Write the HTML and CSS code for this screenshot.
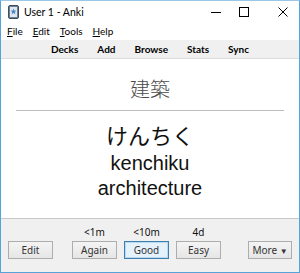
FILE: index.html
```html
<!DOCTYPE html>
<html>
<head>
<meta charset="utf-8">
<link rel="stylesheet" href="styles.css">
</head>
<body>
<div class="window">
  <div class="titlebar">
    <svg class="appicon" width="11" height="14" viewBox="0 0 11 14">
      <rect x="0.5" y="0.5" width="10" height="13" rx="1.5" fill="#6d7f93" stroke="#3f4d5c"/>
      <rect x="2" y="2" width="7" height="10" fill="#dfe8f2"/>
      <path d="M5.5 3.5 L6.3 5.6 L8.5 5.7 L6.8 7.1 L7.4 9.3 L5.5 8.1 L3.6 9.3 L4.2 7.1 L2.5 5.7 L4.7 5.6 Z" fill="#4e86c4"/>
    </svg>
    <span class="title">User 1 - Anki</span>
    <div class="controls">
      <svg class="min" width="10" height="10" viewBox="0 0 10 10"><path d="M0 5.5H10" stroke="#000" stroke-width="1"/></svg>
      <svg class="max" width="10" height="10" viewBox="0 0 10 10"><rect x="0.5" y="0.5" width="9" height="9" fill="none" stroke="#000"/></svg>
      <svg class="close" width="10" height="10" viewBox="0 0 10 10"><path d="M0.5 0.5L9.5 9.5M9.5 0.5L0.5 9.5" stroke="#000" stroke-width="1"/></svg>
    </div>
  </div>
  <div class="menubar">
    <span><u>F</u>ile</span>
    <span><u>E</u>dit</span>
    <span><u>T</u>ools</span>
    <span><u>H</u>elp</span>
  </div>
  <div class="toolbar">
    <span>Decks</span>
    <span>Add</span>
    <span>Browse</span>
    <span>Stats</span>
    <span>Sync</span>
  </div>
  <div class="card">
    <div class="front">建築</div>
    <hr class="divider">
    <div class="reading">けんちく</div>
    <div class="answer first">kenchiku</div>
    <div class="answer">architecture</div>
  </div>
  <div class="bottom">
    <div class="left"><button class="btn">Edit</button></div>
    <div class="middle">
      <div class="ans"><span class="time">&lt;1m</span><button class="btn">Again</button></div>
      <div class="ans"><span class="time">&lt;10m</span><button class="btn focus">Good</button></div>
      <div class="ans"><span class="time">4d</span><button class="btn">Easy</button></div>
    </div>
    <div class="right"><button class="btn more">More <span class="tri">▼</span></button></div>
  </div>
</div>
</body>
</html>
```

FILE: styles.css
```css
html, body {
  margin: 0;
  padding: 0;
  background: #fff;
}
.window {
  width: 300px;
  height: 273px;
  box-sizing: border-box;
  border: 1px solid #56a3da;
  border-top-color: #9cc6e6;
  display: flex;
  flex-direction: column;
  font-family: "Noto Sans", "Open Sans", sans-serif;
  font-size: 11px;
  color: #000;
  background: #fff;
}
.titlebar {
  height: 21px;
  display: flex;
  align-items: center;
  padding-left: 7px;
}
.appicon {
  margin-right: 5px;
  margin-top: 1px;
}
.title {
  font-family: "Lato", "Noto Sans", sans-serif;
  font-size: 10.5px;
  color: #000;
}
.controls {
  margin-left: auto;
  display: flex;
  align-items: center;
  padding-right: 11px;
}
.controls .max {
  margin-left: 18px;
}
.controls .close {
  margin-left: 29px;
}
.menubar {
  height: 18px;
  display: flex;
  align-items: center;
  padding-left: 6px;
  gap: 10px;
  font-family: "Lato", "Noto Sans", sans-serif;
  font-size: 10px;
}
.menubar u {
  text-decoration-thickness: 1px;
  text-underline-offset: 1px;
}
.toolbar {
  height: 18px;
  background: #f0f0f0;
  border-bottom: 1px solid #dcdcdc;
  display: flex;
  align-items: center;
  justify-content: center;
  gap: 19px;
  font-family: "Lato", "Noto Sans", sans-serif;
  font-size: 10px;
  font-weight: bold;
}
.card {
  flex: 1;
  display: flex;
  flex-direction: column;
  align-items: center;
  padding: 16px 15px 0;
  background: #fff;
}
.front {
  font-family: "Noto Sans CJK JP", sans-serif;
  font-weight: 300;
  font-size: 20px;
  line-height: 28px;
  color: #4a4a4a;
}
.divider {
  width: 100%;
  border: 0;
  border-top: 1px solid #bdbdbd;
  margin: 7px 0 9px;
}
.reading {
  font-family: "Noto Sans CJK JP", sans-serif;
  font-size: 22px;
  line-height: 28px;
  color: #111;
}
.answer {
  font-family: "Liberation Sans", Arial, sans-serif;
  font-size: 20px;
  line-height: 25px;
  color: #111;
}
.answer.first {
  margin-top: 3px;
}
.bottom {
  height: 54px;
  box-sizing: border-box;
  background: #f0f0f0;
  border-top: 1px solid #c8c8c8;
  display: flex;
  align-items: flex-end;
  padding: 0 8px 13px 7px;
  flex-shrink: 0;
}
.left, .right {
  width: 45px;
}
.right {
  display: flex;
  justify-content: flex-end;
  margin-right: -1px;
}
.middle {
  flex: 1;
  display: flex;
  justify-content: center;
  gap: 7px;
  padding-right: 7px;
}
.ans {
  display: flex;
  flex-direction: column;
  align-items: center;
}
.time {
  font-size: 10px;
  line-height: 12px;
  margin-bottom: 3px;
  color: #111;
}
.btn {
  width: 45px;
  height: 18px;
  box-sizing: border-box;
  border: 1px solid #adadad;
  background: linear-gradient(#f4f4f4, #e6e6e6);
  font-family: "Noto Sans", "Open Sans", sans-serif;
  font-size: 10px;
  color: #333;
  padding: 0;
  line-height: 14px;
  border-radius: 0;
}
.btn.more {
  width: 44px;
}
.btn.focus {
  border-color: #3c7fb1;
  box-shadow: inset 0 0 0 1px #bcd9ef;
  background: #e5f1fb;
}
.tri {
  font-size: 8px;
}
```
